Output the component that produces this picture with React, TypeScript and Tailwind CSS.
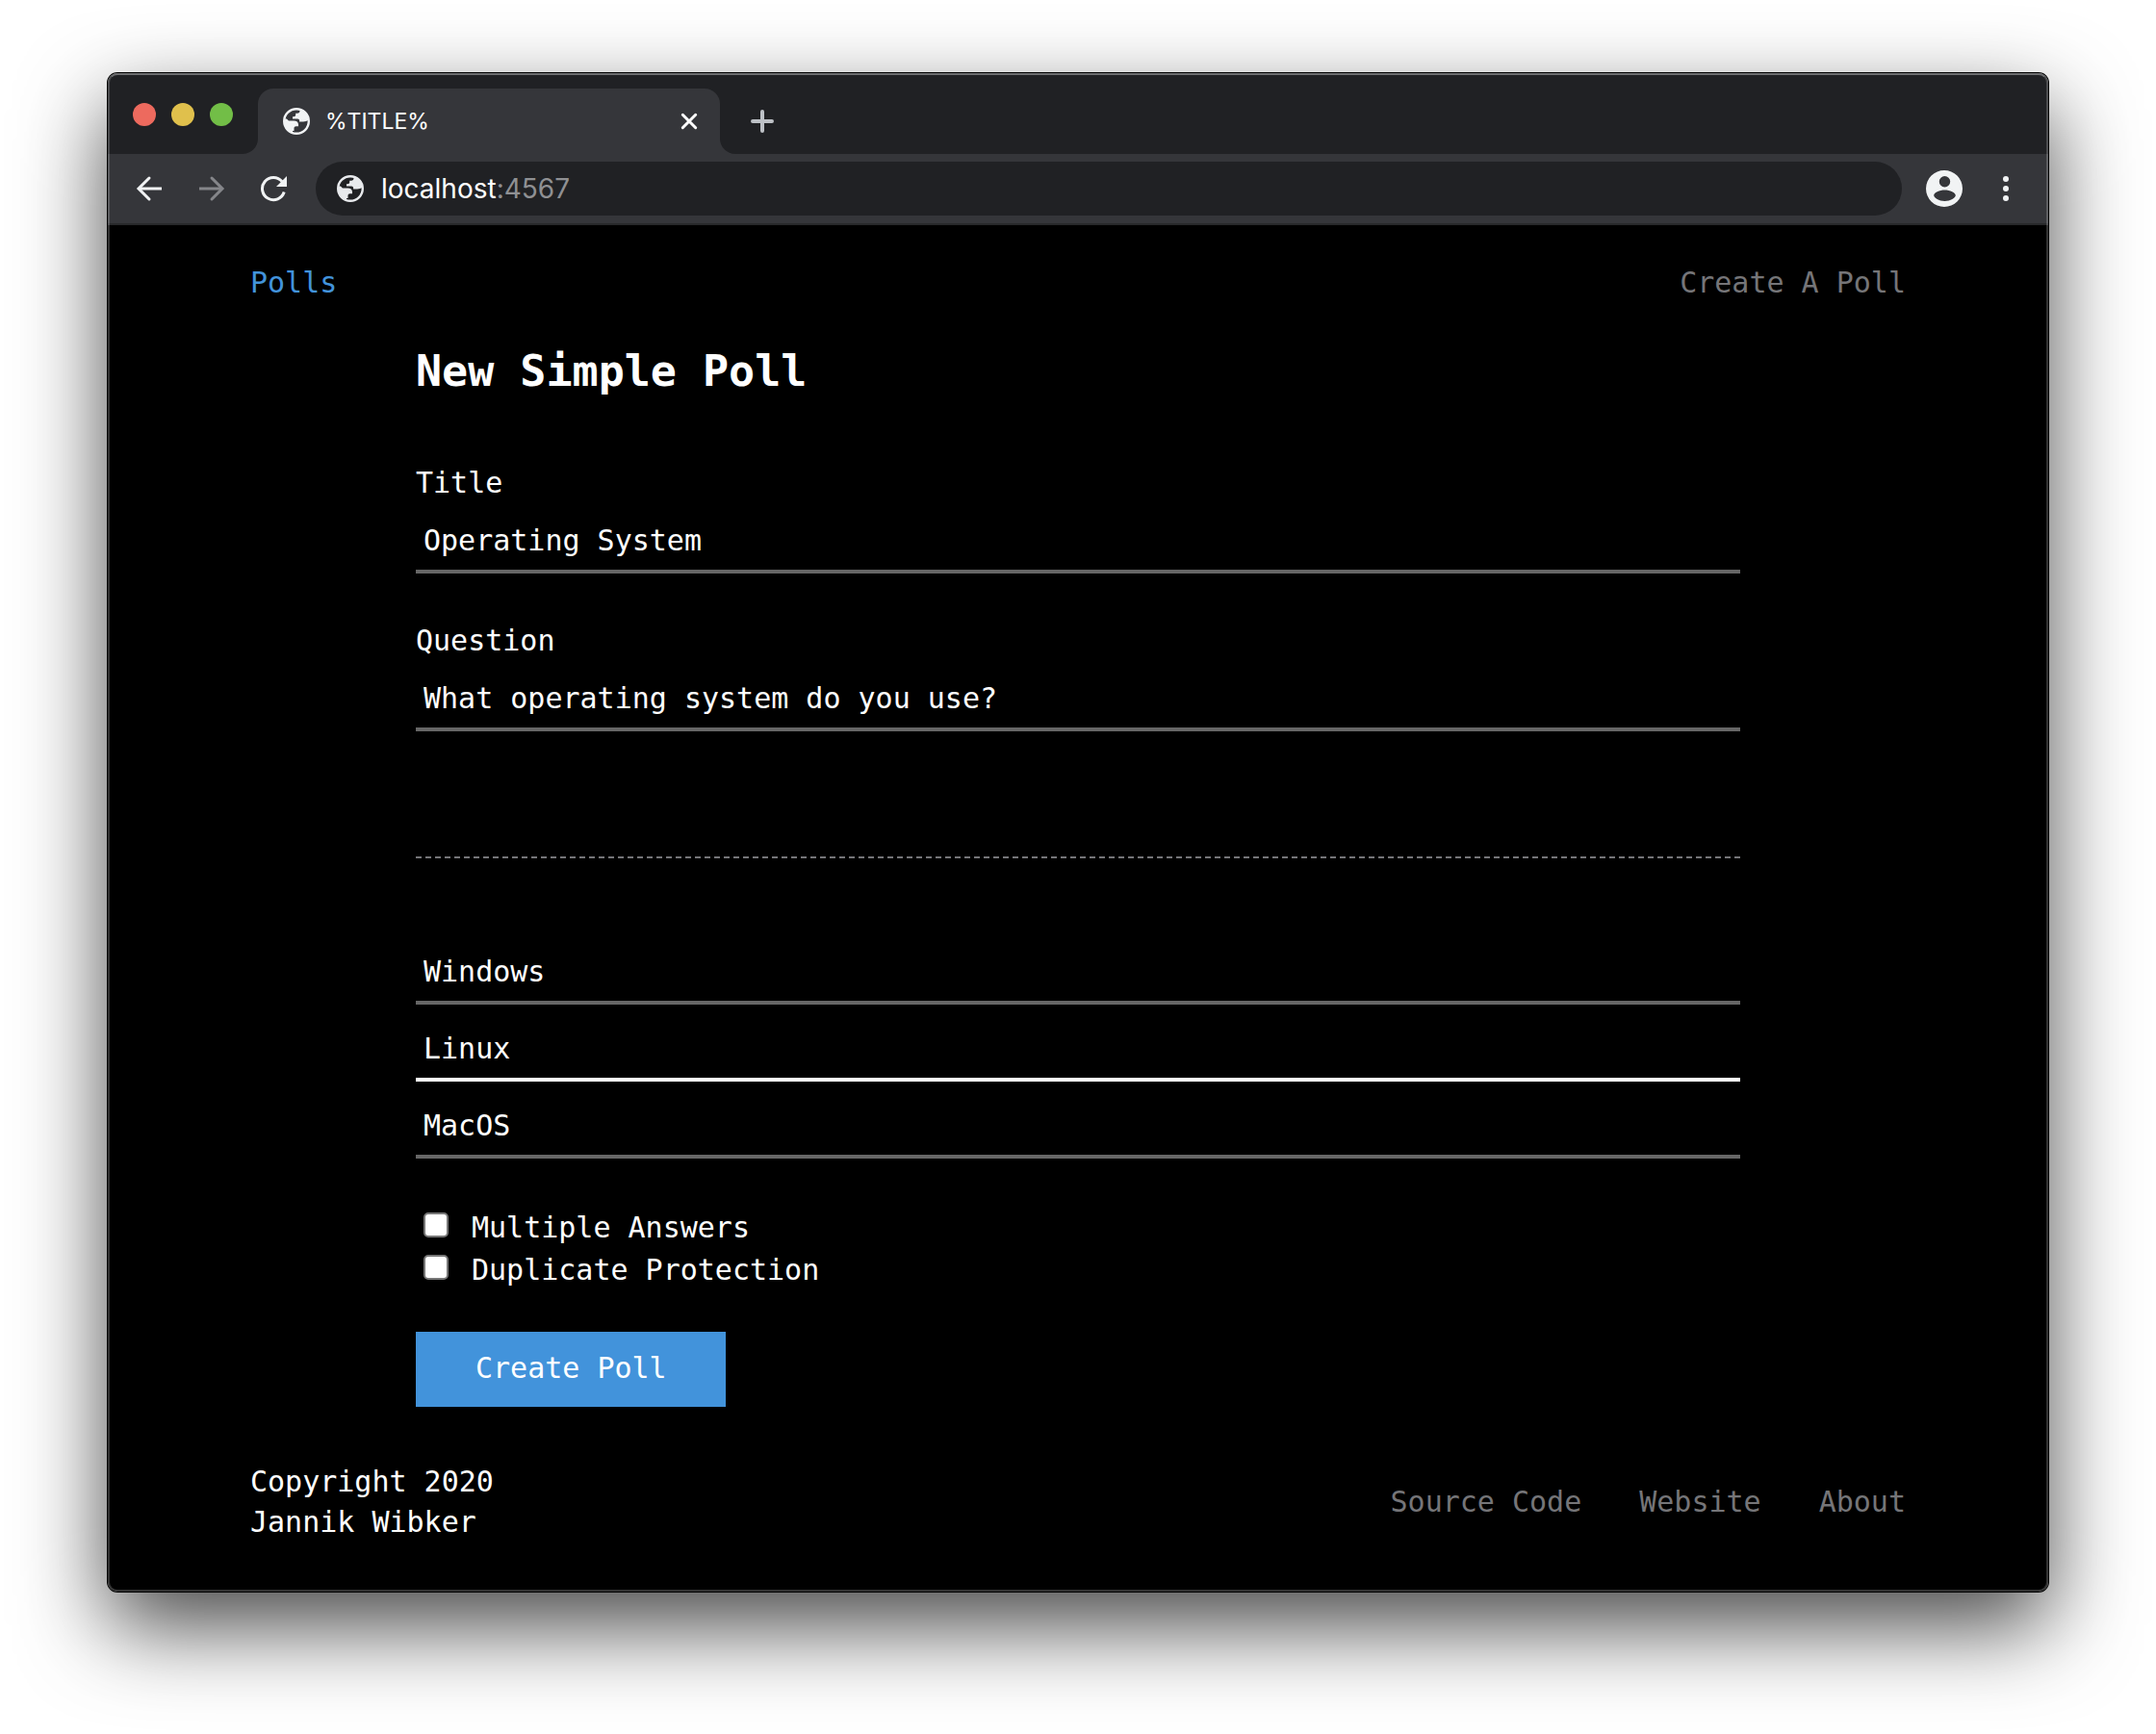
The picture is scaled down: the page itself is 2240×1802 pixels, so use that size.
import type { ReactNode } from "react";

function GlobeIcon({ className }: { className: string }) {
  return (
    <svg viewBox="0 0 28 28" className={className} aria-hidden="true">
      <circle cx="14" cy="14" r="12.8" fill="none" stroke="currentColor" strokeWidth="2.400" />
      <path
        fill="currentColor"
        d="M17.500 1.500v1.800c0 1.500-1 2.500-2.500 2.500h-1.800v1.500c0 1.200-.8 1.900-2 1.900h-1.200v2.300h5.200c1.200 0 1.900.8 1.900 1.900v1.200h3.900c2.600 0 3.800-1.300 5-1.300l.8.200C27 7 23 2 17.500 1.500z"
      />
      <path
        fill="currentColor"
        d="M1.300 11.500h2.600l2 2h5.600c2.700 0 4.500 1.600 4.500 4v1.800h-2.300c-1.400 0-2.200.9-2.200 2.200v2.500h-1.500v2.500C5 25 1 20 1.300 11.500z"
      />
    </svg>
  );
}

function TrafficLights() {
  return (
    <div className="flex gap-4 pt-[31px] pl-[26px]">
      <button type="button" aria-label="Close window" className="size-6 rounded-full bg-[#ed6a5e]" />
      <button type="button" aria-label="Minimise window" className="size-6 rounded-full bg-[#e0c04c]" />
      <button type="button" aria-label="Zoom window" className="size-6 rounded-full bg-[#72be47]" />
    </div>
  );
}

function TabCurve({ side }: { side: "left" | "right" }) {
  return (
    <svg viewBox="0 0 16 16" className="size-4 self-end text-[#35363a]" aria-hidden="true">
      <path fill="currentColor" d={side === "left" ? "M16 0v16H0A16 16 0 0 0 16 0z" : "M0 0v16h16A16 16 0 0 1 0 0z"} />
    </svg>
  );
}

function TabStrip() {
  return (
    <div className="flex h-[84px] bg-[#202124]">
      <TrafficLights />
      <div className="ml-[10px] flex pt-4">
        <TabCurve side="left" />
        <div className="flex w-[480px] items-center rounded-t-2xl bg-[#35363a] pr-[22px] pl-[26px]">
          <GlobeIcon className="size-7 text-[#f1f3f4]" />
          <span className="ml-4 flex-1 text-[23px] text-white">%TITLE%</span>
          <button type="button" aria-label="Close tab" className="text-white">
            <svg viewBox="0 0 20 20" className="size-5" fill="none" stroke="currentColor" strokeWidth="3" strokeLinecap="round">
              <path d="M3.300 3.300l13.400 13.400M16.700 3.300L3.300 16.700" />
            </svg>
          </button>
        </div>
        <TabCurve side="right" />
        <button type="button" aria-label="New tab" className="ml-4 text-[#bdc1c6]">
          <svg viewBox="0 0 24 24" className="size-6" fill="none" stroke="currentColor" strokeWidth="4" strokeLinecap="round">
            <path d="M12 2v20M2 12h20" />
          </svg>
        </button>
      </div>
    </div>
  );
}

function Toolbar() {
  return (
    <div className="flex h-[74px] items-center border-b-2 border-[#28292b] bg-[#35363a] pr-[41px] pl-[29px] text-[#f1f3f4]">
      <button type="button" aria-label="Back">
        <svg viewBox="0 0 28 28" className="size-7" fill="none" stroke="currentColor" strokeWidth="3">
          <path strokeLinecap="round" d="M14 3L3 14l11 11" />
          <path d="M3 14h24" />
        </svg>
      </button>
      <button type="button" aria-label="Forward" className="ml-[37px] text-[#85868a]">
        <svg viewBox="0 0 28 28" className="size-7" fill="none" stroke="currentColor" strokeWidth="3">
          <path strokeLinecap="round" d="M14 3l11 11-11 11" />
          <path d="M1 14h24" />
        </svg>
      </button>
      <button type="button" aria-label="Reload" className="ml-9">
        <svg viewBox="0 0 28 28" className="size-7" fill="none" stroke="currentColor" strokeWidth="3">
          <path d="M25.200 17.500A11.600 11.600 0 1 1 23 6.600" />
          <path fill="currentColor" stroke="none" d="M28 1v11H17z" />
        </svg>
      </button>
      <label className="ml-[30px] flex h-14 flex-1 items-center rounded-full bg-[#202124] pl-[22px] text-[28px]">
        <GlobeIcon className="size-7 text-[#e8eaed]" />
        <span className="ml-[18px] text-white">
          localhost<span className="text-[#8f9093]">:4567</span>
        </span>
      </label>
      <button type="button" aria-label="Profile" className="ml-[25px]">
        <svg viewBox="0 0 38 38" className="size-[38px]">
          <path
            fill="currentColor"
            fillRule="evenodd"
            d="M19 0a19 19 0 1 0 0 38a19 19 0 1 0 0-38zM19.500 6a5.700 5.700 0 1 1 0 11.400a5.700 5.700 0 1 1 0-11.400zM19.500 20.500c5.500 0 11.300 2.700 11.300 5.500c0 2.600-5.500 6-11.300 6s-11.300-3.400-11.300-6c0-2.800 5.800-5.500 11.300-5.500z"
          />
        </svg>
      </button>
      <button type="button" aria-label="Menu" className="ml-[42px]">
        <svg viewBox="0 0 6 26" className="h-[26px] w-[6px]" fill="currentColor">
          <circle cx="3" cy="3" r="3" />
          <circle cx="3" cy="13" r="3" />
          <circle cx="3" cy="23" r="3" />
        </svg>
      </button>
    </div>
  );
}

function TextField({ id, label, value }: { id: string; label: string; value: string }) {
  return (
    <div>
      <label htmlFor={id} className="block">
        {label}
      </label>
      <input
        id={id}
        type="text"
        defaultValue={value}
        className="mt-[7px] block h-[66px] w-full border-b-4 border-[#666666] bg-transparent px-2 outline-none"
      />
    </div>
  );
}

function Option({ value, active, n }: { value: string; active?: boolean; n: number }) {
  return (
    <input
      type="text"
      aria-label={`Answer ${n}`}
      defaultValue={value}
      className={`block h-[66px] w-full border-b-4 bg-transparent px-2 outline-none ${active ? "border-white" : "border-[#666666]"}`}
    />
  );
}

function CheckField({ id, children }: { id: string; children: ReactNode }) {
  return (
    <div className="flex h-11 gap-6 pl-2">
      <input
        id={id}
        type="checkbox"
        className="mt-1 size-[26px] appearance-none rounded-[5px] border-2 border-[#767676] bg-white checked:bg-[#4293db]"
      />
      <label htmlFor={id} className="leading-10">
        {children}
      </label>
    </div>
  );
}

function PollPage() {
  return (
    <div className="bg-black px-12 pt-[39px] pb-[51px] font-['DejaVu_Sans_Mono',monospace] text-[30px] leading-[42px] text-white">
      <div className="mx-auto w-full max-w-[1720px]">
        <nav className="flex justify-between">
          <a href="#polls" className="text-[#4293db]">Polls</a>
          <a href="#create" className="text-[#757578]">Create A Poll</a>
        </nav>
        <form className="mx-auto w-4/5">
          <h1 className="mt-10 text-[45px] leading-[62px] font-bold">New Simple Poll</h1>
          <div className="mt-16 flex flex-col gap-[49px]">
            <TextField id="title" label="Title" value="Operating System" />
            <TextField id="question" label="Question" value="What operating system do you use?" />
          </div>
          <hr className="mt-[130px] border-t-2 border-dashed border-[#757578]" />
          <div className="mt-[86px] flex flex-col gap-[14px]">
            <Option n={1} value="Windows" />
            <Option n={2} value="Linux" active />
            <Option n={3} value="MacOS" />
          </div>
          <div className="mt-[52px]">
            <CheckField id="multiple">Multiple Answers</CheckField>
            <CheckField id="duplicate">Duplicate Protection</CheckField>
          </div>
          <button type="submit" className="mt-10 block h-[78px] bg-[#4293db] pr-[61px] pb-[3px] pl-[62px]">
            Create Poll
          </button>
        </form>
        <footer className="mt-[57px] flex items-center justify-between">
          <p>
            Copyright 2020
            <br />
            Jannik Wibker
          </p>
          <div className="flex gap-[60px] text-[#757578]">
            <a href="#source">Source Code</a>
            <a href="#website">Website</a>
            <a href="#about">About</a>
          </div>
        </footer>
      </div>
    </div>
  );
}

export default function App() {
  return (
    <div className="min-h-screen bg-white px-28 pt-[76px] pb-[148px] font-['Inter',sans-serif]">
      <div className="relative overflow-hidden rounded-[10px] shadow-[0_0_0_1px_#000,0_36px_90px_rgba(0,0,0,0.72)]">
        <TabStrip />
        <Toolbar />
        <PollPage />
        <div className="pointer-events-none absolute inset-0 rounded-[10px] border-2 border-t-white/35 border-r-white/20 border-b-white/20 border-l-white/20" />
      </div>
    </div>
  );
}
